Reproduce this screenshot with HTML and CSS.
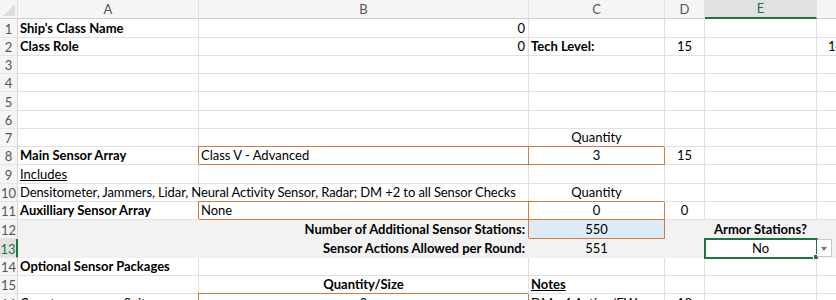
FILE: index.html
```html
<!DOCTYPE html>
<html>
<head>
  <title>Sensors - Ship Design</title>
  <link rel="stylesheet" href="styles.css">
</head>
<body>
  <table class="sheet">
    <colgroup>
      <col class="col-rh">
      <col class="col-a">
      <col class="col-b">
      <col class="col-c">
      <col class="col-d">
      <col class="col-e">
      <col class="col-f">
    </colgroup>
    <tr class="head">
      <th class="corner"></th><th>A</th><th>B</th><th>C</th><th>D</th><th class="sel">E</th><th></th>
    </tr>
    <tr class="h19">
      <th>1</th><td class="bold">Ship's Class Name</td><td class="right">0</td><td></td><td></td><td></td><td></td>
    </tr>
    <tr>
      <th>2</th><td class="bold">Class Role</td><td class="right">0</td><td class="bold">Tech Level:</td><td class="center">15</td><td></td><td class="indent">14</td>
    </tr>
    <tr><th>3</th><td></td><td></td><td></td><td></td><td></td><td></td></tr>
    <tr><th>4</th><td></td><td></td><td></td><td></td><td></td><td></td></tr>
    <tr class="h19"><th>5</th><td></td><td></td><td></td><td></td><td></td><td></td></tr>
    <tr><th>6</th><td></td><td></td><td></td><td></td><td></td><td></td></tr>
    <tr>
      <th>7</th><td></td><td></td><td class="center">Quantity</td><td></td><td></td><td></td>
    </tr>
    <tr>
      <th>8</th><td class="bold">Main Sensor Array</td><td class="box">Class V - Advanced</td><td class="box center">3</td><td class="center">15</td><td></td><td></td>
    </tr>
    <tr class="h19">
      <th>9</th><td class="link">Includes</td><td></td><td></td><td></td><td></td><td></td>
    </tr>
    <tr>
      <th>10</th><td colspan="2" class="tight">Densitometer, Jammers, Lidar, Neural Activity Sensor, Radar; DM +2 to all Sensor Checks</td><td class="center">Quantity</td><td></td><td></td><td></td>
    </tr>
    <tr>
      <th>11</th><td class="bold">Auxilliary Sensor Array</td><td class="box">None</td><td class="box center">0</td><td class="center">0</td><td></td><td></td>
    </tr>
    <tr class="h19 shade">
      <th>12</th><td colspan="2" class="bold right">Number of Additional Sensor Stations:</td><td class="box calc center">550</td><td></td><td class="bold center">Armor Stations?</td><td></td>
    </tr>
    <tr class="shade">
      <th class="active">13</th><td colspan="2" class="bold right">Sensor Actions Allowed per Round:</td><td class="center">551</td><td></td><td class="picked center">No</td><td><span class="drop"></span></td>
    </tr>
    <tr>
      <th>14</th><td class="bold">Optional Sensor Packages</td><td></td><td></td><td></td><td></td><td></td>
    </tr>
    <tr>
      <th>15</th><td></td><td class="bold center">Quantity/Size</td><td class="bold link">Notes</td><td></td><td></td><td></td>
    </tr>
    <tr class="h19">
      <th>16</th><td>Countermeasures Suite</td><td class="box center">0</td><td>DM +4 Active/EW</td><td class="center">10</td><td></td><td></td>
    </tr>
  </table>
</body>
</html>
```

FILE: styles.css
```css
body {
  margin: 0;
  overflow: hidden;
  background: #fff;
}

.sheet {
  border-collapse: separate;
  border-spacing: 0;
  table-layout: fixed;
  width: 906px;
  font-family: Lato, "Liberation Sans", sans-serif;
  font-size: 13px;
  color: #000;
}

.col-rh { width: 18px; }
.col-a { width: 181px; }
.col-b { width: 330px; }
.col-c { width: 136px; }
.col-d { width: 40px; }
.col-e { width: 112px; }
.col-f { width: 89px; }

.sheet td,
.sheet th {
  box-sizing: border-box;
  height: 18px;
  padding: 0 2px 1px;
  line-height: 16px;
  vertical-align: bottom;
  white-space: nowrap;
  overflow: hidden;
  border-right: 1px solid #e1e1e1;
  border-bottom: 1px solid #e1e1e1;
  text-align: left;
}

.sheet tr.h19 td,
.sheet tr.h19 th {
  height: 19px;
}

/* row and column headers */
.sheet th {
  background: #f5f5f5;
  color: #555;
  font-weight: normal;
  text-align: center;
  padding: 0;
  border-right-color: #d6d6d6;
  border-bottom-color: #e6e6e6;
}

.sheet .head th {
  height: 18px;
  line-height: 17px;
  vertical-align: middle;
  border-bottom: 1px solid #cfcfcf;
  border-right-color: #e3e3e3;
}

.sheet .head th.sel {
  background: #e1e1e1;
  color: #217346;
  border-bottom: 2px solid #217346;
}

.sheet th.corner {
  position: relative;
  background: #f5f5f5;
}

.sheet th.corner::after {
  content: "";
  position: absolute;
  right: 2px;
  bottom: 2px;
  border-style: solid;
  border-width: 0 0 12px 12px;
  border-color: transparent transparent #dcdcdc transparent;
}

.sheet th.active {
  background: #e1e1e1;
  color: #217346;
  border-right: 2px solid #217346;
}

/* cell formats */
.bold { font-weight: bold; }
.sheet .right { text-align: right; padding-right: 3px; }
.sheet .center { text-align: center; }
.sheet .indent { padding-left: 11px; }
.link { text-decoration: underline; }
.tight { letter-spacing: -0.1px; }

.sheet td.box {
  border-right-color: #d27a40;
  border-bottom-color: #d27a40;
  box-shadow: -1px -1px 0 #d27a40;
}

.sheet td.calc {
  background: #ddebf7;
}

.sheet tr.shade td {
  background: #f2f2f2;
  border-right-color: #f2f2f2;
  border-bottom-color: #f2f2f2;
}

.sheet tr.shade td.box {
  background: #ddebf7;
  border-right-color: #d27a40;
  border-bottom-color: #d27a40;
}

.sheet tr.shade td.picked {
  position: relative;
  overflow: visible;
  background: #fff;
  outline: 2px solid #217346;
  outline-offset: -1px;
}

.sheet td.picked::after {
  content: "";
  position: absolute;
  right: -3px;
  bottom: -3px;
  width: 4px;
  height: 4px;
  background: #217346;
  border: 1px solid #fff;
}

.drop {
  display: block;
  box-sizing: border-box;
  width: 16px;
  height: 18px;
  margin-left: -1px;
  background: #fff;
  border: 1px solid #c8c8c8;
  position: relative;
}

.drop::after {
  content: "";
  position: absolute;
  left: 4px;
  top: 7px;
  border-style: solid;
  border-width: 4px 3.5px 0 3.5px;
  border-color: #777 transparent transparent transparent;
}

.sheet tr.shade td:last-child {
  padding: 0;
  vertical-align: top;
}
```
